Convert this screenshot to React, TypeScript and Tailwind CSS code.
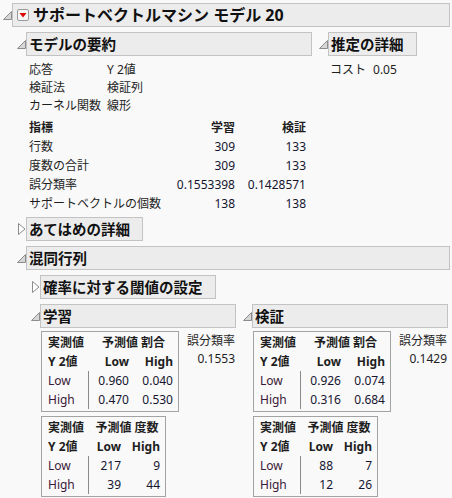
import React from 'react';

const Tri = ({ open = true }: { open?: boolean }) => (
  <div className="w-[12px] h-[24px] flex items-center shrink-0">
    {open ? (
      <svg width="9" height="9" viewBox="0 0 9 9" className="ml-[3px]">
        <polygon points="0.5,8.5 8.5,0.5 8.5,8.5" fill="#d6d6d6" stroke="#8c8c8c" strokeWidth="1" />
      </svg>
    ) : (
      <svg width="8" height="12" viewBox="0 0 8 12" className="ml-[4px]">
        <polygon points="0.5,0.5 7,6 0.5,11.5" fill="#ffffff" stroke="#8c8c8c" strokeWidth="1" />
      </svg>
    )}
  </div>
);

const Header = ({ children, className = '' }: { children: React.ReactNode; className?: string }) => (
  <div
    className={`h-[24px] border border-[#c3c3c3] bg-[#ececec] flex items-center pl-[2px] font-bold text-[14.5px] leading-none text-[#111111] ${className}`}
  >
    {children}
  </div>
);

type Row = [string, string, string];

const CrossTab = ({
  gridClass,
  group,
  rows,
}: {
  gridClass: string;
  group: string;
  rows: Row[];
}) => (
  <div className="w-fit border border-[#a3a3a3] pt-[1px] pb-[2px]">
    <div className={`grid ${gridClass} leading-none`}>
      <div className="h-[19px] flex items-center pl-[6px] font-bold">実測値</div>
      <div className="col-span-2 h-[19px] flex items-center justify-center font-bold">{group}</div>

      <div className="h-[19px] flex items-center pl-[6px] font-bold">Y 2値</div>
      <div className="h-[19px] flex items-center justify-end pr-[4px] font-bold">Low</div>
      <div className="h-[19px] flex items-center justify-end pr-[5px] font-bold">High</div>

      {rows.map(r => (
        <React.Fragment key={r[0]}>
          <div className="h-[19px] flex items-center pl-[6px] border-r border-[#8a8a8a] text-[#3a1838]">{r[0]}</div>
          <div className="h-[19px] flex items-center justify-end pr-[4px] text-[#151530]">{r[1]}</div>
          <div className="h-[19px] flex items-center justify-end pr-[5px] text-[#151530]">{r[2]}</div>
        </React.Fragment>
      ))}
    </div>
  </div>
);

const Section = ({
  title,
  rate,
  probs,
  counts,
}: {
  title: string;
  rate: string;
  probs: Row[];
  counts: Row[];
}) => (
  <div>
    <div className="flex">
      <Tri />
      <Header className="w-[196px]">{title}</Header>
    </div>
    <div className="flex pl-[13px] mt-[3px]">
      <div className="flex flex-col gap-[4px]">
        <CrossTab gridClass="grid-cols-[47px_44px_45px]" group="予測値 割合" rows={probs} />
        <CrossTab gridClass="grid-cols-[47px_36px_40px]" group="予測値 度数" rows={counts} />
      </div>
      <div className="ml-[8px] pt-[1px] flex flex-col items-end leading-none">
        <div className="h-[18px] flex items-center">誤分類率</div>
        <div className="h-[18px] flex items-center">{rate}</div>
      </div>
    </div>
  </div>
);

const summary: [string, string][] = [
  ['応答', 'Y 2値'],
  ['検証法', '検証列'],
  ['カーネル関数', '線形'],
];

const stats: Row[] = [
  ['行数', '309', '133'],
  ['度数の合計', '309', '133'],
  ['誤分類率', '0.1553398', '0.1428571'],
  ['サポートベクトルの個数', '138', '138'],
];

export default function App() {
  return (
    <div className="w-[452px] h-[498px] overflow-hidden bg-[#f9f9f9] pt-[3px] text-[12px] text-[#1e1e1e] font-['Noto_Sans','Noto_Sans_CJK_JP',sans-serif]">
      <div className="flex">
        <Tri />
        <div className="w-[438px] h-[24px] border border-[#c3c3c3] bg-[#ececec] flex items-center">
          <svg width="12" height="12" viewBox="0 0 12 12" className="ml-[4px] shrink-0">
            <rect x="0.5" y="0.5" width="11" height="11" rx="1.5" fill="#f6f6f6" stroke="#9a9a9a" />
            <polygon points="2.5,4 9.5,4 6,8.5" fill="#e00000" />
          </svg>
          <span className="ml-[4px] font-bold text-[16px] leading-none text-[#111111]">
            サポートベクトルマシン モデル 20
          </span>
        </div>
      </div>

      <div className="pl-[14px]">
        <div className="flex gap-[4px] mt-[5px]">
          <div>
            <div className="flex">
              <Tri />
              <Header className="w-[286px]">モデルの要約</Header>
            </div>
            <div className="pl-[15px] pt-[5px] leading-none">
              {summary.map(([k, v]) => (
                <div key={k} className="h-[18px] flex items-center">
                  <span className="w-[78px]">{k}</span>
                  <span>{v}</span>
                </div>
              ))}
              <div className="mt-[3px] grid grid-cols-[140px_66px_71px]">
                <div className="h-[19px] flex items-center font-bold">指標</div>
                <div className="h-[19px] flex items-center justify-end font-bold">学習</div>
                <div className="h-[19px] flex items-center justify-end font-bold">検証</div>
                {stats.map(r => (
                  <React.Fragment key={r[0]}>
                    <div className="h-[19px] flex items-center">{r[0]}</div>
                    <div className="h-[19px] flex items-center justify-end text-[#151530]">{r[1]}</div>
                    <div className="h-[19px] flex items-center justify-end text-[#151530]">{r[2]}</div>
                  </React.Fragment>
                ))}
              </div>
            </div>
          </div>
          <div>
            <div className="flex">
              <Tri />
              <Header className="pr-[12px]">推定の詳細</Header>
            </div>
            <div className="pl-[14px] pt-[5px] leading-none">
              <div className="h-[18px] flex items-center gap-[7px]">
                <span>コスト</span>
                <span>0.05</span>
              </div>
            </div>
          </div>
        </div>

        <div className="flex mt-[4px]">
          <Tri open={false} />
          <Header className="pr-[12px]">あてはめの詳細</Header>
        </div>

        <div className="flex mt-[5px]">
          <Tri />
          <Header className="w-[424px]">混同行列</Header>
        </div>

        <div className="pl-[14px]">
          <div className="flex mt-[5px]">
            <Tri open={false} />
            <Header className="pr-[12px]">確率に対する閾値の設定</Header>
          </div>
          <div className="flex gap-[4px] mt-[5px]">
            <Section
              title="学習"
              rate="0.1553"
              probs={[
                ['Low', '0.960', '0.040'],
                ['High', '0.470', '0.530'],
              ]}
              counts={[
                ['Low', '217', '9'],
                ['High', '39', '44'],
              ]}
            />
            <Section
              title="検証"
              rate="0.1429"
              probs={[
                ['Low', '0.926', '0.074'],
                ['High', '0.316', '0.684'],
              ]}
              counts={[
                ['Low', '88', '7'],
                ['High', '12', '26'],
              ]}
            />
          </div>
        </div>
      </div>
    </div>
  );
}
